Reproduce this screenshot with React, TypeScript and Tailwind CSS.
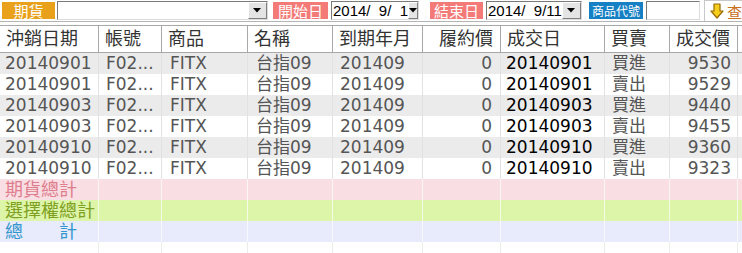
const cols = "grid grid-cols-[99px_63px_86px_85px_90px_78px_104px_65px_68px_1fr]";

const rows = [
  { d: "20140901", side: "買進", price: "9530" },
  { d: "20140901", side: "賣出", price: "9529" },
  { d: "20140903", side: "買進", price: "9440" },
  { d: "20140903", side: "賣出", price: "9455" },
  { d: "20140910", side: "買進", price: "9360" },
  { d: "20140910", side: "賣出", price: "9323" },
];

const headers: { t: string; right?: boolean }[] = [
  { t: "沖銷日期" },
  { t: "帳號" },
  { t: "商品" },
  { t: "名稱" },
  { t: "到期年月" },
  { t: "履約價", right: true },
  { t: "成交日" },
  { t: "買賣" },
  { t: "成交價", right: true },
  { t: "" },
];

const Label = ({ text, color, w, size }: { text: string; color: string; w: string; size: string }) => (
  <div
    className={`h-[17px] ${w} ${color} ${size} text-white flex items-center justify-center leading-none font-['Noto_Sans_CJK_TC',sans-serif]`}
  >
    {text}
  </div>
);

const DropBtn = ({ w }: { w: string }) => (
  <div className={`${w} h-full bg-[#e4e4e4] border-l border-t border-white border-r border-b border-r-[#808080] border-b-[#808080] flex items-center justify-center`}>
    <svg width="8" height="5" viewBox="0 0 8 5">
      <path d="M0 0h8L4 4.5z" fill="#000" />
    </svg>
  </div>
);

const Sunken = "h-[19px] bg-white border border-t-[#7a7a7a] border-l-[#7a7a7a] border-r-[#dcdcdc] border-b-[#dcdcdc] flex items-stretch";

export default function App() {
  return (
    <div className="w-[742px] h-[253px] bg-white overflow-hidden font-['DejaVu_Sans','Noto_Sans_CJK_TC',sans-serif]">
      {/* toolbar */}
      <div className="h-[22px] border-b border-[#b4b4b4] flex items-center pl-[2px] whitespace-nowrap">
        <Label text="期貨" color="bg-[#e9a11b]" w="w-[54px]" size="text-[15px]" />
        <div className={`${Sunken} w-[215px] ml-[2px]`}>
          <div className="flex-1" />
          <DropBtn w="w-[19px]" />
        </div>
        <div className="ml-[5px]">
          <Label text="開始日" color="bg-[#f47a78]" w="w-[55px]" size="text-[15px]" />
        </div>
        <div className={`${Sunken} w-[88px] ml-[3px]`}>
          <div className="flex-1 pl-[1px] text-[15px] leading-[17px] text-black whitespace-pre font-['Liberation_Sans',sans-serif]">2014/  9/  1</div>
          <DropBtn w="w-[16px]" />
        </div>
        <div className="ml-[11px]">
          <Label text="結束日" color="bg-[#f47a78]" w="w-[53px]" size="text-[15px]" />
        </div>
        <div className={`${Sunken} w-[96px] ml-[3px]`}>
          <div className="flex-1 pl-[1px] text-[15px] leading-[17px] text-black whitespace-pre font-['Liberation_Sans',sans-serif]">2014/  9/11</div>
          <DropBtn w="w-[21px]" />
        </div>
        <div className="ml-[7px]">
          <Label text="商品代號" color="bg-[#1680c4]" w="w-[54px]" size="text-[12px]" />
        </div>
        <div className={`${Sunken} w-[55px] ml-[3px]`} />
        <div className="ml-[4px] h-[21px] flex-1 border-l border-t border-[#c8c8c8] flex items-center pl-[5px] gap-[3px]">
          <svg width="14" height="16" viewBox="0 0 14 16">
            <path d="M4 1h6v7h3L7 15 1 8h3z" fill="#f6cf1c" stroke="#9a6a00" strokeWidth="1.2" strokeLinejoin="round" />
          </svg>
          <span className="text-[15px] leading-none text-[#c8701e] font-['Noto_Sans_CJK_TC',sans-serif]">查</span>
        </div>
      </div>

      {/* header */}
      <div className={`${cols} mt-[3px] h-[28px] border-t border-b border-[#a8a8a8] text-[18px] text-[#333]`}>
        {headers.map((h, i) => (
          <div
            key={i}
            className={`border-r border-[#a8a8a8] flex items-center leading-none ${h.right ? "justify-end pr-[7px]" : "pl-[6px]"} ${i === 9 ? "border-r-0" : ""}`}
          >
            {h.t}
          </div>
        ))}
      </div>

      {/* data */}
      {rows.map((r, i) => (
        <div
          key={i}
          className={`${cols} h-[21px] text-[17px] leading-none text-[#555] ${i % 2 === 0 ? "bg-[#ebebeb]" : "bg-white"}`}
        >
          <div className="border-r border-[#e2e2e2] flex items-center pl-[5px]">{r.d}</div>
          <div className="border-r border-[#e2e2e2] flex items-center pl-[7px]">F02...</div>
          <div className="border-r border-[#e2e2e2] flex items-center pl-[8px]">FITX</div>
          <div className="border-r border-[#e2e2e2] flex items-center pl-[8px]">台指09</div>
          <div className="border-r border-[#e2e2e2] flex items-center pl-[7px]">201409</div>
          <div className="border-r border-[#e2e2e2] flex items-center justify-end pr-[8px]">0</div>
          <div className="border-r border-[#e2e2e2] flex items-center pl-[5px] text-black">{r.d}</div>
          <div className="border-r border-[#e2e2e2] flex items-center pl-[7px]">{r.side}</div>
          <div className="border-r border-[#e2e2e2] flex items-center justify-end pr-[6px]">{r.price}</div>
          <div />
        </div>
      ))}

      {/* totals */}
      {[
        { t: "期貨總計", bg: "bg-[#f9dfe4]", c: "text-[#e07d8d]" },
        { t: "選擇權總計", bg: "bg-[#ddf5a8]", c: "text-[#7fa022]" },
        { t: "總　　計", bg: "bg-[#e8ebfb]", c: "text-[#3496cf]" },
      ].map((s, i) => (
        <div key={i} className={`${cols} h-[21px] ${s.bg} text-[18px] leading-none`}>
          <div className={`border-r border-white/70 flex items-center pl-[5px] whitespace-pre ${s.c}`}>{s.t}</div>
          {Array.from({ length: 8 }).map((_, j) => (
            <div key={j} className="border-r border-white/70" />
          ))}
          <div />
        </div>
      ))}

      {/* empty tail */}
      <div className={`${cols} h-[11px]`}>
        {Array.from({ length: 9 }).map((_, j) => (
          <div key={j} className="border-r border-[#ececec]" />
        ))}
        <div />
      </div>
    </div>
  );
}
